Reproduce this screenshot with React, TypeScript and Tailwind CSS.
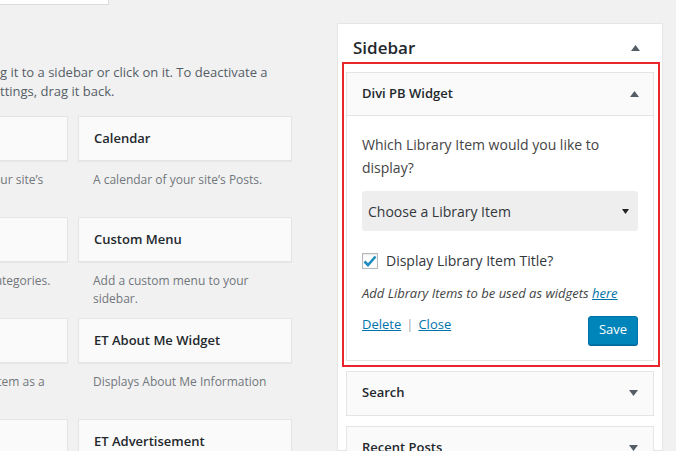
import React from "react";

const font = { fontFamily: '"Open Sans", "Noto Sans", sans-serif' };

function Caret({ up = false }: { up?: boolean }) {
  return (
    <svg width="9" height="6" viewBox="0 0 9 6" className="shrink-0">
      {up ? <path d="M0 6 L4.5 0 L9 6 Z" fill="#555d66" /> : <path d="M0 0 L9 0 L4.5 6 Z" fill="#555d66" />}
    </svg>
  );
}

const rows = [
  [
    { title: "Archives", desc: "A monthly archive of your site’s Posts." },
    { title: "Calendar", desc: "A calendar of your site’s Posts." },
  ],
  [
    { title: "Categories", desc: "A list or dropdown of categories." },
    { title: "Custom Menu", desc: "Add a custom menu to your sidebar." },
  ],
  [
    { title: "Divi Library", desc: "Displays a Divi Library item as a widget." },
    { title: "ET About Me Widget", desc: "Displays About Me Information" },
  ],
  [
    { title: "ET Adsense", desc: "Displays Adsense Ads" },
    { title: "ET Advertisement", desc: "Displays Advertisements" },
  ],
];

function WidgetCard({ title, desc }: { title: string; desc: string }) {
  return (
    <div className="w-[214px] h-[101px] shrink-0">
      <div className="h-[45px] bg-[#fafafa] border border-[#e5e5e5] shadow-[0_1px_1px_rgba(0,0,0,0.04)] flex items-center px-[15px] text-[13px] font-semibold text-[#23282d]">
        {title}
      </div>
      <p className="mt-[10px] px-[15px] text-[12px] leading-[18px] text-[#72777c]">{desc}</p>
    </div>
  );
}

export default function App() {
  return (
    <div style={font} className="w-[676px] h-[451px] overflow-hidden bg-[#f1f1f1] flex">
      <div className="flex-1 min-w-0 overflow-hidden">
        <div className="w-[109px] h-[5px] bg-white border-r border-b border-[#dddddd]" />
        <div className="mt-[58px] text-[13px] leading-[19px] text-[#555d66] whitespace-nowrap">
          <div>g it to a sidebar or click on it. To deactivate a</div>
          <div>ttings, drag it back.</div>
        </div>
        <div className="mt-[15px] ml-[-146px] flex flex-col">
          {rows.map((r, i) => (
            <div key={i} className="flex gap-[10px]">
              {r.map((w) => (
                <WidgetCard key={w.title} {...w} />
              ))}
            </div>
          ))}
        </div>
      </div>

      <div className="w-[326px] mt-[23px] mr-[13px] shrink-0 bg-white border border-[#e5e5e5] px-[8px]">
        <div className="h-[38px] flex items-center justify-between pl-[7px] pr-[14px] pt-[10px]">
          <h2 className="text-[17px] font-semibold text-[#23282d]">Sidebar</h2>
          <Caret up />
        </div>

        <div className="ml-[-4px] mr-[-6px] border-2 border-[#e8262b] pt-[8px] pb-[4px] pl-[2px] pr-[4px]">
          <div className="border border-[#e5e5e5] bg-white">
            <div className="h-[43px] bg-[#fafafa] border-b border-[#e5e5e5] flex items-center justify-between pl-[15px] pr-[14px]">
              <h3 className="text-[13px] font-semibold text-[#23282d]">Divi PB Widget</h3>
              <Caret up />
            </div>
            <div className="px-[15px] pt-[17px] pb-[15px]">
              <p className="text-[14px] leading-[23px] text-[#444]">Which Library Item would you like to display?</p>
              <div className="mt-[12px] h-[40px] bg-[#eeeeee] rounded-[3px] flex items-center justify-between pl-[6px] pr-[9px]">
                <span className="text-[14px] text-[#32373c]">Choose a Library Item</span>
                <svg width="7" height="5" viewBox="0 0 7 5">
                  <path d="M0 0 L7 0 L3.5 5 Z" fill="#222" />
                </svg>
              </div>
              <label className="mt-[19px] flex items-center gap-[8px]">
                <span className="w-[16px] h-[16px] border border-[#b4b9be] bg-white shadow-[inset_0_1px_2px_rgba(0,0,0,0.1)] flex items-center justify-center">
                  <svg width="14" height="12" viewBox="0 0 14 12">
                    <path d="M1.5 6.5 L5 10 L12.5 1.5" stroke="#1e8cbe" strokeWidth="2.6" fill="none" />
                  </svg>
                </span>
                <span className="text-[14px] text-[#32373c]">Display Library Item Title?</span>
              </label>
              <p className="mt-[13px] text-[13px] italic text-[#444]">
                Add Library Items to be used as widgets{" "}
                <span className="text-[#0073aa] underline">here</span>
              </p>
              <div className="mt-[11px] flex items-start justify-between">
                <div className="text-[13px]">
                  <span className="text-[#0073aa] underline">Delete</span>
                  <span className="text-[#a0a5aa] mx-[5px]">|</span>
                  <span className="text-[#0073aa] underline">Close</span>
                </div>
                <button className="mt-[1px] h-[29px] w-[50px] rounded-[3px] bg-[#0085ba] border border-[#0073aa] shadow-[0_1px_0_#006799] text-white text-[13px]">
                  Save
                </button>
              </div>
            </div>
          </div>
        </div>

        <div className="mt-[4px] h-[45px] bg-[#fafafa] border border-[#e5e5e5] flex items-center justify-between pl-[15px] pr-[15px]">
          <h3 className="text-[13px] font-semibold text-[#23282d]">Search</h3>
          <Caret />
        </div>
        <div className="mt-[10px] h-[45px] bg-[#fafafa] border border-[#e5e5e5] flex items-center justify-between pl-[15px] pr-[15px]">
          <h3 className="text-[13px] font-semibold text-[#23282d]">Recent Posts</h3>
          <Caret />
        </div>
      </div>
    </div>
  );
}
